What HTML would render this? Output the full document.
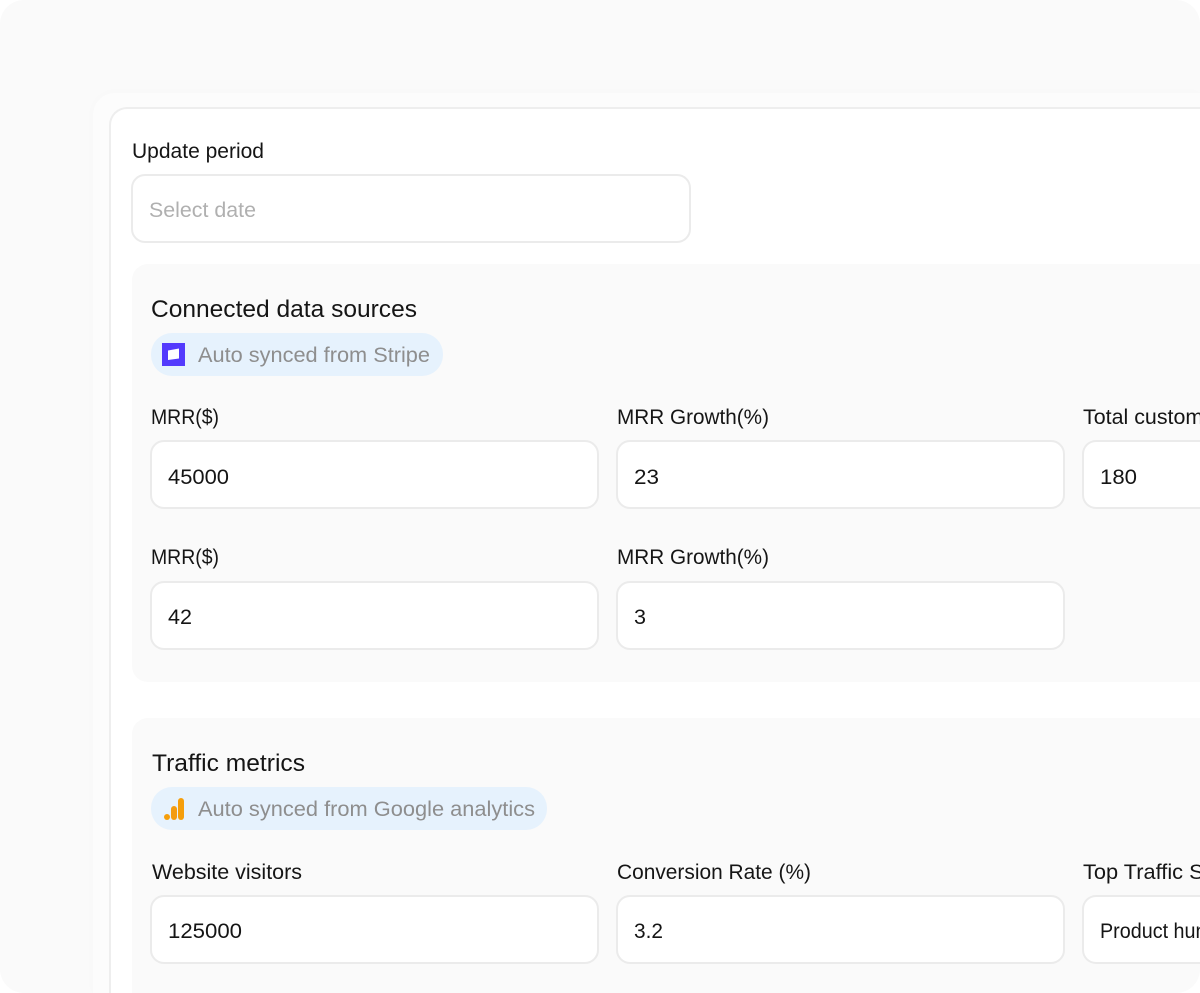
<!DOCTYPE html>
<html lang="en">
<head>
<meta charset="utf-8">
<title>Update period</title>
<style>
html,body{margin:0;padding:0;width:1200px;height:993px;overflow:hidden;background:#fff}
.outer,.mid,.card,.sec,.in,.pill{position:absolute;box-sizing:border-box}
.outer{left:0;top:0;width:1200px;height:993px;background:#fafafa;border-radius:24px;overflow:hidden}
.mid{left:93px;top:93px;width:1107px;height:900px;background:#fcfcfc;border-radius:22px 0 0 0;box-shadow:0 0 14px rgba(0,0,0,.015)}
.card{left:109px;top:107px;width:1091px;height:886px;background:#fff;border:2px solid #eeeeee;border-right:0;border-bottom:0;border-radius:18px 0 0 0}
.sec{background:#fafafa;left:132px;width:1068px}
.in{background:#fff;border:2px solid #ebebeb;border-radius:14px;height:69px;width:449px}
.pill{background:#e6f2fd;border-radius:21px;height:43px;left:151px}
svg.t{position:absolute;left:0;top:0;display:block}
text{font-family:"Liberation Sans",Arial,sans-serif;font-size:21px;fill:#151515}
.g{fill:#8e8e8e}
.p{fill:#b0b0b0}
.h{font-size:24px}
</style>
</head>
<body>
<div class="outer">
  <div class="mid"></div>
  <div class="card"></div>
  <div class="in" style="left:131px;top:174px;width:560px"></div>

  <div class="sec" style="top:264px;height:418px;border-radius:16px 0 0 16px"></div>
  <div class="pill" style="top:333px;width:292px"></div>
  <div class="in" style="left:150px;top:440px"></div>
  <div class="in" style="left:616px;top:440px"></div>
  <div class="in" style="left:1082px;top:440px;width:118px;border-right:0;border-radius:14px 0 0 14px"></div>
  <div class="in" style="left:150px;top:581px"></div>
  <div class="in" style="left:616px;top:581px"></div>

  <div class="sec" style="top:718px;height:275px;border-radius:16px 0 0 0"></div>
  <div class="pill" style="top:787px;width:396px"></div>
  <div class="in" style="left:150px;top:895px"></div>
  <div class="in" style="left:616px;top:895px"></div>
  <div class="in" style="left:1082px;top:895px;width:118px;border-right:0;border-radius:14px 0 0 14px"></div>

  <svg class="t" width="1200" height="993" viewBox="0 0 1200 993" xmlns="http://www.w3.org/2000/svg">
    <rect x="162" y="343" width="23" height="23" fill="#533afd"/>
    <path d="M168 350.5 L179 348.5 V358.5 L168 360 Z" fill="#fff"/>
    <rect x="164" y="814" width="6" height="6" rx="3" fill="#f59e0b"/>
    <rect x="171" y="806" width="6" height="14" rx="3" fill="#f39c12"/>
    <rect x="178" y="798" width="6" height="22" rx="3" fill="#f59e0b"/>

    <text x="132" y="158" textLength="132" lengthAdjust="spacingAndGlyphs">Update period</text>
    <text x="149" y="217" textLength="107" lengthAdjust="spacingAndGlyphs" class="p">Select date</text>

    <text x="151" y="317" textLength="266" lengthAdjust="spacingAndGlyphs" class="h">Connected data sources</text>
    <text x="198" y="362" textLength="232" lengthAdjust="spacingAndGlyphs" class="g">Auto synced from Stripe</text>

    <text x="151" y="424" textLength="68" lengthAdjust="spacingAndGlyphs">MRR($)</text>
    <text x="617" y="424" textLength="152" lengthAdjust="spacingAndGlyphs">MRR Growth(%)</text>
    <text x="1083" y="424" textLength="150" lengthAdjust="spacingAndGlyphs">Total customers</text>
    <text x="168" y="484" textLength="61" lengthAdjust="spacingAndGlyphs">45000</text>
    <text x="634" y="484" textLength="25" lengthAdjust="spacingAndGlyphs">23</text>
    <text x="1100" y="484" textLength="37" lengthAdjust="spacingAndGlyphs">180</text>

    <text x="151" y="564" textLength="68" lengthAdjust="spacingAndGlyphs">MRR($)</text>
    <text x="617" y="564" textLength="152" lengthAdjust="spacingAndGlyphs">MRR Growth(%)</text>
    <text x="168" y="624" textLength="24" lengthAdjust="spacingAndGlyphs">42</text>
    <text x="634" y="624" textLength="12" lengthAdjust="spacingAndGlyphs">3</text>

    <text x="152" y="771" textLength="153" lengthAdjust="spacingAndGlyphs" class="h">Traffic metrics</text>
    <text x="198" y="816" textLength="337" lengthAdjust="spacingAndGlyphs" class="g">Auto synced from Google analytics</text>

    <text x="152" y="879" textLength="150" lengthAdjust="spacingAndGlyphs">Website visitors</text>
    <text x="617" y="879" textLength="194" lengthAdjust="spacingAndGlyphs">Conversion Rate (%)</text>
    <text x="1083" y="879" textLength="186" lengthAdjust="spacingAndGlyphs">Top Traffic Sources</text>
    <text x="168" y="938" textLength="74" lengthAdjust="spacingAndGlyphs">125000</text>
    <text x="634" y="938" textLength="29" lengthAdjust="spacingAndGlyphs">3.2</text>
    <text x="1100" y="938" textLength="112" lengthAdjust="spacingAndGlyphs">Product hunt</text>
  </svg>
</div>
</body>
</html>
